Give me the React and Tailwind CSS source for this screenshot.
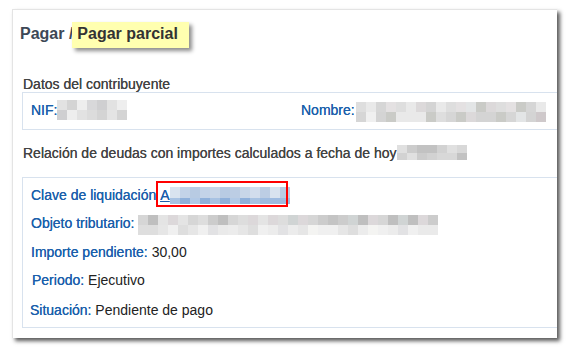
import React from "react";

function gen(n, palette, seed) {
  const out = [];
  let s = seed;
  for (let i = 0; i < n; i++) {
    s = (s * 9301 + 49297) % 233280;
    out.push(palette[Math.floor((s / 233280) * palette.length)]);
  }
  return out;
}

const grayA = ["#dcdcdc", "#d4d4d4", "#e2e2e2", "#d8d8da", "#e8e8e8", "#cfcfd1", "#e4e4e4", "#eeeeee"];
const grayB = ["#dcd9da", "#d6d6d6", "#e4e1e2", "#cfc9cb", "#dedede", "#e9e9e9", "#cacbc7", "#e3e5e6", "#d4d4d4", "#f0f0f0"];
const grayTop = ["#dddddd", "#cccccc", "#c4c4c4", "#d6d6d6", "#e4e4e4", "#d0d4d4", "#dcd8da", "#bfbfbf"];
const grayBot = ["#e6e6e6", "#ececec", "#f0f0f0", "#e2e2e4", "#eaeaea", "#f4f4f2", "#dedede"];
const dateP = ["#d8d8d8", "#cccccc", "#d2d2d2", "#e0e0e0", "#c2c2c2", "#d0d2d4"];
const blueTop = ["#c8d6e8", "#bccde4", "#d2dded", "#c3d3e8", "#d9e3ef", "#b8cbe3"];
const blueBot = ["#9ebbe0", "#a8c2e2", "#93b3db", "#b2c9e6", "#8fb0da"];

const nifRows = [
  { h: "h-[10px]", c: gen(7, grayA, 3) },
  { h: "h-[10px]", c: gen(7, grayA, 11) },
];
const nombreRows = [
  { h: "h-[10px]", c: gen(19, grayB, 7) },
  { h: "h-[10px]", c: gen(19, grayB, 23) },
];
const objRows = [
  { h: "h-[10px]", c: gen(30, grayTop, 5) },
  { h: "h-[10px]", c: gen(30, grayBot, 17) },
];
const dateRows = [
  { h: "h-[8px]", c: gen(7, dateP, 9) },
  { h: "h-[7px]", c: gen(7, dateP, 31) },
];
const claveRows = [
  { h: "h-[11px]", c: gen(12, blueTop, 13) },
  { h: "h-[6px]", c: gen(12, blueBot, 29) },
];

function Mosaic({ rows }) {
  return (
    <span className="inline-flex flex-col shrink-0">
      {rows.map((r, i) => (
        <span key={i} className={"flex " + r.h}>
          {r.c.map((c, j) => (
            <span key={j} className="w-[10px] h-full" style={{ background: c }} />
          ))}
        </span>
      ))}
    </span>
  );
}

const lbl = "text-[#1c5fab] [text-shadow:0_0_0.5px_#1c5fab]";

export default function App() {
  return (
    <div className="w-[569px] h-[349px] bg-white overflow-hidden pl-[12px] pt-[9px] font-['Liberation_Sans',Arial,sans-serif]">
      <div className="w-[545px] h-[329px] bg-white border-t border-l border-[#e4e4e4] shadow-[3px_3px_4px_rgba(0,0,0,0.65)] pl-[9px] pt-[12px] overflow-hidden">
        {/* Title */}
        <div className="flex items-start ml-[-2px] text-[16px] leading-[18px] font-bold">
          <span className="pt-[3px] text-[#3d4856]">Pagar /</span>
          <span className="ml-[-1px] pl-[5px] pr-[11px] pt-[3px] pb-[5px] bg-[#ffffb0] text-[#333333] shadow-[3px_3px_4px_rgba(0,0,0,0.45)]">
            Pagar parcial
          </span>
        </div>

        <div className="mt-[28px] text-[14px] leading-[16px] text-[#444444] pl-[1px] [text-shadow:0_0_0.4px_#444444]">
          Datos del contribuyente
        </div>

        <div className="border-t border-b border-l border-[#d8e2ee] pl-[8px] pt-[9px] pb-[11px] text-[14px] leading-[16px]">
          <div className="flex items-center h-[16px]">
            <div className="w-[270px] flex items-center">
              <span className={lbl}>NIF:</span>
              <Mosaic rows={nifRows} />
            </div>
            <div className="flex items-center">
              <span className={lbl}>Nombre:</span>
              <span className="ml-[1px]">
                <Mosaic rows={nombreRows} />
              </span>
            </div>
          </div>
        </div>

        <div className="mt-[15px] flex items-start text-[14px] leading-[16px] text-[#444444] pl-[1px]">
          <span className="[text-shadow:0_0_0.4px_#444444]">Relación de deudas con importes calculados a fecha de hoy</span>
          <Mosaic rows={dateRows} />
        </div>

        <div className="mt-[16px] border-t border-b border-l border-[#d8e2ee] pl-[8px] pt-[9px] pb-[9px] text-[14px] leading-[16px] text-[#222222]">
          <div className="relative flex items-start h-[16px]">
            <span className={lbl}>Clave de liquidación&nbsp;</span>
            <span className={lbl + " underline"}>A</span>
            <span className="mt-[-2px]">
              <Mosaic rows={claveRows} />
            </span>
            <span className="absolute left-[125px] top-[-6px] w-[132px] h-[26px] border-[2.5px] border-[#ff0000]" />
          </div>
          <div className="mt-[12px] flex items-start h-[16px]">
            <span className={lbl}>Objeto tributario:&nbsp;</span>
            <Mosaic rows={objRows} />
          </div>
          <div className="mt-[13px] h-[16px]">
            <span className={lbl}>Importe pendiente:</span> 30,00
          </div>
          <div className="mt-[12px] h-[16px] pl-[1px]">
            <span className={lbl}>Periodo:</span> Ejecutivo
          </div>
          <div className="mt-[14px] h-[16px] ml-[-1px]">
            <span className={lbl}>Situación:</span> Pendiente de pago
          </div>
        </div>
      </div>
    </div>
  );
}
